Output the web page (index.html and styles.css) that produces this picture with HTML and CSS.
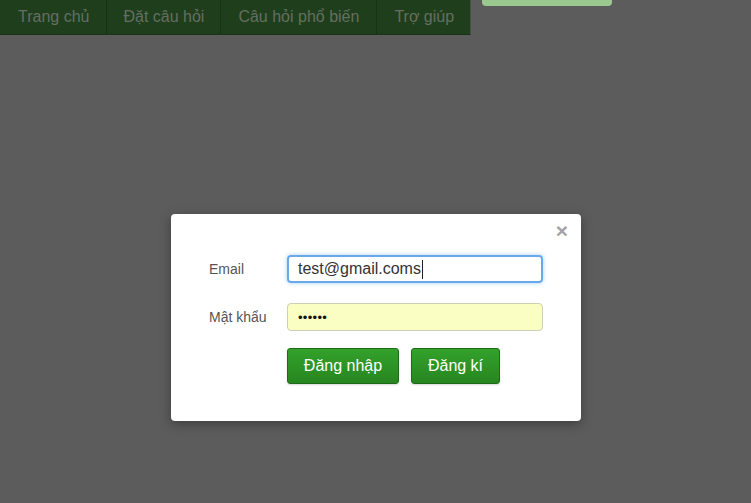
FILE: index.html
```html
<!DOCTYPE html>
<html lang="vi">
<head>
<meta charset="utf-8">
<title>Đăng nhập</title>
<link rel="stylesheet" href="styles.css">
</head>
<body>
<header class="topbar">
  <nav class="nav">
    <a class="nav-item" href="#">Trang chủ</a>
    <a class="nav-item" href="#">Đặt câu hỏi</a>
    <a class="nav-item" href="#">Câu hỏi phổ biến</a>
    <a class="nav-item" href="#">Trợ giúp</a>
  </nav>
  <div class="top-btn"></div>
</header>

<div class="modal">
  <div class="modal-head"><span class="close">×</span></div>
  <form class="modal-body">
    <div class="row">
      <label class="label">Email</label>
      <div class="input focus">test@gmail.coms<span class="caret"></span></div>
    </div>
    <div class="row">
      <label class="label">Mật khẩu</label>
      <div class="input autofill">••••••</div>
    </div>
    <div class="row actions">
      <button type="button" class="btn btn-login">Đăng nhập</button>
      <button type="button" class="btn btn-reg">Đăng kí</button>
    </div>
  </form>
</div>
</body>
</html>
```

FILE: styles.css
```css
html, body {
  margin: 0;
  padding: 0;
  height: 100%;
}
body {
  background: #5c5c5c;
  font-family: "Liberation Sans", Arial, sans-serif;
  overflow: hidden;
}
.topbar {
  display: flex;
  align-items: flex-start;
}
.nav {
  display: flex;
  height: 35px;
  background: #1f3e1c;
  border-bottom: 1px solid #1a3318;
  box-sizing: border-box;
  border-right: 1px solid #4a4f49;
}
.nav-item {
  display: flex;
  align-items: center;
  padding: 0 17px 1px 17px;
  color: #646e62;
  text-decoration: none;
  font-size: 16px;
  border-right: 1px solid #183316;
}
.nav-item:first-child { padding-left: 18px; }
.nav-item:nth-child(2) { padding-left: 16px; padding-right: 16px; }
.nav-item:nth-child(3) { padding-left: 17px; padding-right: 17px; }
.nav-item:last-child { border-right: none; padding-right: 16px; }
.top-btn {
  margin-left: 11px;
  width: 130px;
  height: 6px;
  background: #9bc88e;
  border-radius: 0 0 4px 4px;
}
.modal {
  position: absolute;
  left: 171px;
  top: 214px;
  width: 410px;
  height: 207px;
  background: #fff;
  border-radius: 4px;
  box-shadow: 0 3px 12px rgba(0,0,0,0.35);
}
.modal-head {
  display: flex;
  justify-content: flex-end;
  padding: 6px 13px 0 0;
  height: 35px;
  box-sizing: border-box;
}
.close {
  color: #a3a3a3;
  font-size: 21px;
  line-height: 21px;
  font-weight: bold;
}
.modal-body {
  padding: 6px 38px 0 38px;
  display: flex;
  flex-direction: column;
  gap: 20px;
}
.row {
  display: flex;
  align-items: center;
}
.label {
  width: 78px;
  color: #555;
  font-size: 14px;
}
.input {
  width: 256px;
  height: 28px;
  box-sizing: border-box;
  border-radius: 4px;
  border: 1px solid #ccc;
  padding: 0 10px;
  display: flex;
  align-items: center;
  font-size: 16px;
  color: #333;
}
.input.focus {
  border: 2px solid #6aa8ec;
  padding-left: 9px;
  box-shadow: 0 0 4px rgba(102,175,233,0.6);
}
.caret {
  display: inline-block;
  width: 1px;
  height: 19px;
  background: #222;
  margin-left: 1px;
}
.input.autofill {
  background: #fafec2;
  border-color: #cfcfb5;
  font-size: 13px;
  color: #111;
  letter-spacing: 0.3px;
}
.actions {
  padding-left: 78px;
  gap: 12px;
  margin-top: -3px;
}
.btn {
  height: 36px;
  border: 1px solid #1d6b18;
  border-radius: 3px;
  background: linear-gradient(#33a12b, #27861f);
  color: #fff;
  font-family: "Liberation Sans", Arial, sans-serif;
  font-size: 16px;
  padding: 0;
  box-shadow: 0 1px 2px rgba(0,0,0,0.15);
}
.btn-login { width: 112px; }
.btn-reg { width: 89px; }
```
